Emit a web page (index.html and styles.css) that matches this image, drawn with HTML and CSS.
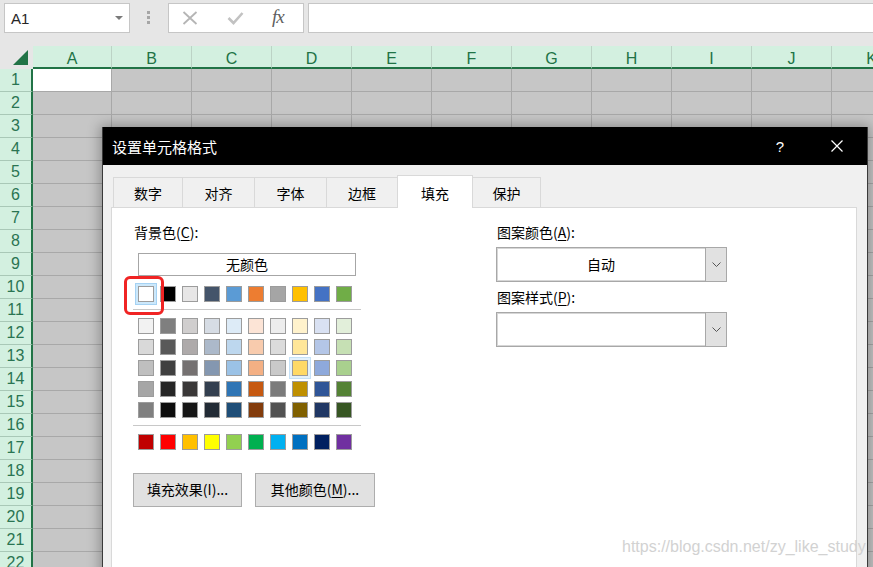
FILE: index.html
```html
<!DOCTYPE html>
<html lang="zh-CN">
<head>
<meta charset="utf-8">
<title>设置单元格格式</title>
<link rel="stylesheet" href="styles.css">
</head>
<body>
<div class="topbar">
  <div class="namebox"><span>A1</span><span class="caret"></span></div>
  <div class="grip"><i></i><i></i><i></i></div>
  <div class="fbtns">
    <svg class="ic-x" width="16" height="14" viewBox="0 0 16 14"><path d="M1.5 1 L14.5 13 M14.5 1 L1.5 13" stroke="#b5b5b5" stroke-width="1.8" fill="none"/></svg>
    <svg class="ic-ok" width="17" height="14" viewBox="0 0 17 14"><path d="M1.5 7 L6.5 12 L15.5 2" stroke="#c2c2c2" stroke-width="2.6" fill="none"/></svg>
    <span class="fx">fx</span>
  </div>
  <div class="finput"></div>
</div>

<div class="sheet">
  <div class="hrow">
    <div class="corner"><svg width="33" height="21" viewBox="0 0 33 21"><polygon points="13,19 28,19 28,4" fill="#217346"/></svg></div>
    <div class="ch first">A</div><div class="ch">B</div><div class="ch">C</div><div class="ch">D</div><div class="ch">E</div><div class="ch">F</div><div class="ch">G</div><div class="ch">H</div><div class="ch">I</div><div class="ch">J</div><div class="ch">K</div>
  </div>
  <div class="row"><div class="rh">1</div><div class="c first act"></div><div class="c"></div><div class="c"></div><div class="c"></div><div class="c"></div><div class="c"></div><div class="c"></div><div class="c"></div><div class="c"></div><div class="c"></div><div class="c"></div></div>
  <div class="row"><div class="rh">2</div><div class="c first"></div><div class="c"></div><div class="c"></div><div class="c"></div><div class="c"></div><div class="c"></div><div class="c"></div><div class="c"></div><div class="c"></div><div class="c"></div><div class="c"></div></div>
  <div class="row"><div class="rh">3</div><div class="c first"></div><div class="c"></div><div class="c"></div><div class="c"></div><div class="c"></div><div class="c"></div><div class="c"></div><div class="c"></div><div class="c"></div><div class="c"></div><div class="c"></div></div>
  <div class="row"><div class="rh">4</div><div class="c first"></div><div class="c"></div><div class="c"></div><div class="c"></div><div class="c"></div><div class="c"></div><div class="c"></div><div class="c"></div><div class="c"></div><div class="c"></div><div class="c"></div></div>
  <div class="row"><div class="rh">5</div><div class="c first"></div><div class="c"></div><div class="c"></div><div class="c"></div><div class="c"></div><div class="c"></div><div class="c"></div><div class="c"></div><div class="c"></div><div class="c"></div><div class="c"></div></div>
  <div class="row"><div class="rh">6</div><div class="c first"></div><div class="c"></div><div class="c"></div><div class="c"></div><div class="c"></div><div class="c"></div><div class="c"></div><div class="c"></div><div class="c"></div><div class="c"></div><div class="c"></div></div>
  <div class="row"><div class="rh">7</div><div class="c first"></div><div class="c"></div><div class="c"></div><div class="c"></div><div class="c"></div><div class="c"></div><div class="c"></div><div class="c"></div><div class="c"></div><div class="c"></div><div class="c"></div></div>
  <div class="row"><div class="rh">8</div><div class="c first"></div><div class="c"></div><div class="c"></div><div class="c"></div><div class="c"></div><div class="c"></div><div class="c"></div><div class="c"></div><div class="c"></div><div class="c"></div><div class="c"></div></div>
  <div class="row"><div class="rh">9</div><div class="c first"></div><div class="c"></div><div class="c"></div><div class="c"></div><div class="c"></div><div class="c"></div><div class="c"></div><div class="c"></div><div class="c"></div><div class="c"></div><div class="c"></div></div>
  <div class="row"><div class="rh">10</div><div class="c first"></div><div class="c"></div><div class="c"></div><div class="c"></div><div class="c"></div><div class="c"></div><div class="c"></div><div class="c"></div><div class="c"></div><div class="c"></div><div class="c"></div></div>
  <div class="row"><div class="rh">11</div><div class="c first"></div><div class="c"></div><div class="c"></div><div class="c"></div><div class="c"></div><div class="c"></div><div class="c"></div><div class="c"></div><div class="c"></div><div class="c"></div><div class="c"></div></div>
  <div class="row"><div class="rh">12</div><div class="c first"></div><div class="c"></div><div class="c"></div><div class="c"></div><div class="c"></div><div class="c"></div><div class="c"></div><div class="c"></div><div class="c"></div><div class="c"></div><div class="c"></div></div>
  <div class="row"><div class="rh">13</div><div class="c first"></div><div class="c"></div><div class="c"></div><div class="c"></div><div class="c"></div><div class="c"></div><div class="c"></div><div class="c"></div><div class="c"></div><div class="c"></div><div class="c"></div></div>
  <div class="row"><div class="rh">14</div><div class="c first"></div><div class="c"></div><div class="c"></div><div class="c"></div><div class="c"></div><div class="c"></div><div class="c"></div><div class="c"></div><div class="c"></div><div class="c"></div><div class="c"></div></div>
  <div class="row"><div class="rh">15</div><div class="c first"></div><div class="c"></div><div class="c"></div><div class="c"></div><div class="c"></div><div class="c"></div><div class="c"></div><div class="c"></div><div class="c"></div><div class="c"></div><div class="c"></div></div>
  <div class="row"><div class="rh">16</div><div class="c first"></div><div class="c"></div><div class="c"></div><div class="c"></div><div class="c"></div><div class="c"></div><div class="c"></div><div class="c"></div><div class="c"></div><div class="c"></div><div class="c"></div></div>
  <div class="row"><div class="rh">17</div><div class="c first"></div><div class="c"></div><div class="c"></div><div class="c"></div><div class="c"></div><div class="c"></div><div class="c"></div><div class="c"></div><div class="c"></div><div class="c"></div><div class="c"></div></div>
  <div class="row"><div class="rh">18</div><div class="c first"></div><div class="c"></div><div class="c"></div><div class="c"></div><div class="c"></div><div class="c"></div><div class="c"></div><div class="c"></div><div class="c"></div><div class="c"></div><div class="c"></div></div>
  <div class="row"><div class="rh">19</div><div class="c first"></div><div class="c"></div><div class="c"></div><div class="c"></div><div class="c"></div><div class="c"></div><div class="c"></div><div class="c"></div><div class="c"></div><div class="c"></div><div class="c"></div></div>
  <div class="row"><div class="rh">20</div><div class="c first"></div><div class="c"></div><div class="c"></div><div class="c"></div><div class="c"></div><div class="c"></div><div class="c"></div><div class="c"></div><div class="c"></div><div class="c"></div><div class="c"></div></div>
  <div class="row"><div class="rh">21</div><div class="c first"></div><div class="c"></div><div class="c"></div><div class="c"></div><div class="c"></div><div class="c"></div><div class="c"></div><div class="c"></div><div class="c"></div><div class="c"></div><div class="c"></div></div>
  <div class="row"><div class="rh">22</div><div class="c first"></div><div class="c"></div><div class="c"></div><div class="c"></div><div class="c"></div><div class="c"></div><div class="c"></div><div class="c"></div><div class="c"></div><div class="c"></div><div class="c"></div></div>
</div>

<div class="dialog">
  <div class="dtitle">
    <span class="dname">设置单元格格式</span>
    <span class="dhelp">?</span>
    <svg class="dclose" width="12" height="12" viewBox="0 0 12 12"><path d="M0.5 0.5 L11.5 11.5 M11.5 0.5 L0.5 11.5" stroke="#fff" stroke-width="1.2" fill="none"/></svg>
  </div>
  <div class="dbody">
    <div class="tabs">
      <div class="tab t1">数字</div>
      <div class="tab t2">对齐</div>
      <div class="tab t3">字体</div>
      <div class="tab t4">边框</div>
      <div class="tab t5 active">填充</div>
      <div class="tab t6">保护</div>
    </div>
    <div class="panel">
      <div class="leftcol">
        <div class="label">背景色(<u>C</u>):</div>
        <div class="nocolor">无颜色</div>
        <div class="swgrid toprow">
          <div class="sw picked" style="background:#ffffff"></div>
          <div class="sw" style="background:#000000"></div>
          <div class="sw" style="background:#e7e6e6"></div>
          <div class="sw" style="background:#44546a"></div>
          <div class="sw" style="background:#5b9bd5"></div>
          <div class="sw" style="background:#ed7d31"></div>
          <div class="sw" style="background:#a5a5a5"></div>
          <div class="sw" style="background:#ffc000"></div>
          <div class="sw" style="background:#4472c4"></div>
          <div class="sw" style="background:#70ad47"></div>
        </div>
        <div class="sep"></div>
        <div class="swgrid theme">
          <div class="sw" style="background:#f2f2f2"></div>
          <div class="sw" style="background:#7f7f7f"></div>
          <div class="sw" style="background:#d0cece"></div>
          <div class="sw" style="background:#d6dce4"></div>
          <div class="sw" style="background:#ddebf7"></div>
          <div class="sw" style="background:#fce4d6"></div>
          <div class="sw" style="background:#ededed"></div>
          <div class="sw" style="background:#fff2cc"></div>
          <div class="sw" style="background:#d9e1f2"></div>
          <div class="sw" style="background:#e2efda"></div>

          <div class="sw" style="background:#d9d9d9"></div>
          <div class="sw" style="background:#595959"></div>
          <div class="sw" style="background:#aeaaaa"></div>
          <div class="sw" style="background:#acb9ca"></div>
          <div class="sw" style="background:#bdd7ee"></div>
          <div class="sw" style="background:#f8cbad"></div>
          <div class="sw" style="background:#dbdbdb"></div>
          <div class="sw" style="background:#ffe699"></div>
          <div class="sw" style="background:#b4c6e7"></div>
          <div class="sw" style="background:#c6e0b4"></div>

          <div class="sw" style="background:#bfbfbf"></div>
          <div class="sw" style="background:#404040"></div>
          <div class="sw" style="background:#757171"></div>
          <div class="sw" style="background:#8497b0"></div>
          <div class="sw" style="background:#9bc2e6"></div>
          <div class="sw" style="background:#f4b084"></div>
          <div class="sw" style="background:#c9c9c9"></div>
          <div class="sw hover" style="background:#ffd966"></div>
          <div class="sw" style="background:#8ea9db"></div>
          <div class="sw" style="background:#a9d08e"></div>

          <div class="sw" style="background:#a6a6a6"></div>
          <div class="sw" style="background:#262626"></div>
          <div class="sw" style="background:#3a3838"></div>
          <div class="sw" style="background:#333f4f"></div>
          <div class="sw" style="background:#2f75b5"></div>
          <div class="sw" style="background:#c65911"></div>
          <div class="sw" style="background:#7b7b7b"></div>
          <div class="sw" style="background:#bf8f00"></div>
          <div class="sw" style="background:#2f5597"></div>
          <div class="sw" style="background:#548235"></div>

          <div class="sw" style="background:#808080"></div>
          <div class="sw" style="background:#0d0d0d"></div>
          <div class="sw" style="background:#161616"></div>
          <div class="sw" style="background:#222b35"></div>
          <div class="sw" style="background:#1f4e78"></div>
          <div class="sw" style="background:#833c0c"></div>
          <div class="sw" style="background:#525252"></div>
          <div class="sw" style="background:#806000"></div>
          <div class="sw" style="background:#203764"></div>
          <div class="sw" style="background:#375623"></div>
        </div>
        <div class="sep"></div>
        <div class="swgrid standard">
          <div class="sw" style="background:#c00000"></div>
          <div class="sw" style="background:#ff0000"></div>
          <div class="sw" style="background:#ffc000"></div>
          <div class="sw" style="background:#ffff00"></div>
          <div class="sw" style="background:#92d050"></div>
          <div class="sw" style="background:#00b050"></div>
          <div class="sw" style="background:#00b0f0"></div>
          <div class="sw" style="background:#0070c0"></div>
          <div class="sw" style="background:#002060"></div>
          <div class="sw" style="background:#7030a0"></div>
        </div>
        <div class="btns">
          <div class="btn b1">填充效果(I)...</div>
          <div class="btn b2">其他颜色(<u>M</u>)...</div>
        </div>
      </div>
      <div class="rightcol">
        <div class="label">图案颜色(<u>A</u>):</div>
        <div class="select">
          <div class="sval">自动</div>
          <div class="sdrop"><svg width="9" height="5" viewBox="0 0 9 5"><path d="M0.5 0.5 L4.5 4.5 L8.5 0.5" stroke="#555" stroke-width="1" fill="none"/></svg></div>
        </div>
        <div class="label l2">图案样式(<u>P</u>):</div>
        <div class="select">
          <div class="sval"></div>
          <div class="sdrop"><svg width="9" height="5" viewBox="0 0 9 5"><path d="M0.5 0.5 L4.5 4.5 L8.5 0.5" stroke="#555" stroke-width="1" fill="none"/></svg></div>
        </div>
      </div>
      <div class="mark"></div>
    </div>
  </div>
</div>

<div class="watermark">https://blog.csdn.net/zy_like_study</div>
</body>
</html>
```

FILE: styles.css
```css
* { box-sizing: border-box; }
html, body { margin: 0; padding: 0; }
body {
  width: 873px;
  height: 567px;
  overflow: hidden;
  position: relative;
  background: #e6e6e6;
  font-family: "Liberation Sans", "Noto Sans CJK SC", sans-serif;
}

/* ---------- formula bar ---------- */
.topbar {
  display: flex;
  align-items: flex-start;
  height: 46px;
  padding: 3px 0 0 4px;
}
.namebox {
  width: 126px;
  height: 30px;
  flex: none;
  background: #fff;
  border: 1px solid #c6c6c6;
  display: flex;
  align-items: center;
  justify-content: space-between;
  padding: 0 6px;
  font-size: 15px;
  color: #262626;
}
.caret {
  width: 0;
  height: 0;
  border-left: 4px solid transparent;
  border-right: 4px solid transparent;
  border-top: 4px solid #7a7a7a;
}
.grip {
  margin: 8px 0 0 17px;
  display: flex;
  flex-direction: column;
  gap: 2px;
  flex: none;
}
.grip i {
  display: block;
  width: 3px;
  height: 3px;
  background: #a6a6a6;
}
.fbtns {
  margin-left: 18px;
  width: 136px;
  height: 30px;
  flex: none;
  background: #fff;
  border: 1px solid #c6c6c6;
  display: flex;
  align-items: center;
  padding-left: 13px;
}
.ic-ok { margin-left: 29px; }
.fx {
  margin-left: 28px;
  font-family: "Liberation Serif", serif;
  font-style: italic;
  font-size: 19px;
  color: #5f5f5f;
  margin-top: -2px;
  letter-spacing: -1px;
}
.finput {
  margin-left: 4px;
  flex: 1;
  height: 30px;
  background: #fff;
  border: 1px solid #c6c6c6;
  border-right: none;
}

/* ---------- sheet ---------- */
.sheet { width: 873px; overflow: hidden; }
.hrow, .row { display: flex; }
.hrow { height: 23px; }
.corner {
  width: 33px;
  height: 23px;
  flex: none;
  background: #e6e6e6;
}
.corner svg { display: block; }
.ch {
  width: 80px;
  height: 23px;
  flex: none;
  background: #d3f0e0;
  border-right: 1px solid #bcd3c6;
  border-bottom: 2px solid #217346;
  text-align: center;
  font-size: 16px;
  line-height: 18px;
  padding-top: 4px;
  color: #217346;
}
.ch.first { width: 79px; }
.row { height: 23px; }
.rh {
  width: 33px;
  flex: none;
  background: #d3f0e0;
  border-right: 2px solid #217346;
  border-bottom: 1px solid #a9c8b7;
  text-align: center;
  font-size: 16px;
  line-height: 20px;
  padding-top: 1px;
  color: #2a7452;
}
.c {
  width: 80px;
  flex: none;
  background: #c6c6c6;
  border-right: 1px solid #a8a8a8;
  border-bottom: 1px solid #a8a8a8;
}
.c.first { width: 79px; }
.c.act { background: #fff; }

/* ---------- dialog ---------- */
.dialog {
  position: absolute;
  left: 102px;
  top: 127px;
  width: 766px;
  height: 460px;
  background: #f0f0f0;
  border: 1px solid #3a3a3a;
  border-top: none;
  box-shadow: 0 0 12px 2px rgba(0, 0, 0, 0.3);
  font-family: "Noto Sans CJK SC", "Liberation Sans", sans-serif;
  color: #000;
}
.dtitle {
  height: 38px;
  background: #000;
  color: #fff;
  display: flex;
  align-items: center;
  padding-left: 9px;
  font-size: 15px;
}
.dhelp {
  margin-left: auto;
  font-size: 15px;
  font-family: "Liberation Sans", sans-serif;
}
.dclose { margin: 0 24px 0 47px; }

.dbody { padding: 10px 10px 0 8px; }
.tabs {
  display: flex;
  align-items: flex-end;
  height: 32px;
  padding-left: 2px;
}
.tab {
  height: 30px;
  flex: none;
  border: 1px solid #d9d9d9;
  border-bottom: none;
  margin-left: -1px;
  background: #f0f0f0;
  font-size: 14px;
  text-align: center;
  line-height: 28px;
  padding-top: 1px;
}
.t1 { width: 70px; margin-left: 0; }
.t2 { width: 73px; }
.t3 { width: 73px; }
.t4 { width: 72px; }
.t5 { width: 76px; }
.t6 { width: 69px; }
.tab.active {
  height: 33px;
  margin-bottom: -1px;
  background: #fff;
  position: relative;
  z-index: 1;
  padding-top: 3px;
}

.panel {
  position: relative;
  height: 400px;
  background: #fff;
  border: 1px solid #d9d9d9;
  display: flex;
  align-items: flex-start;
  padding: 14px 0 0 21px;
}
.leftcol { width: 228px; flex: none; }
.rightcol { width: 231px; flex: none; margin-left: 135px; }
.label {
  font-size: 14px;
  line-height: 20px;
  padding-left: 1px;
}
.label u, .btn u { text-underline-offset: 2px; }
.nocolor {
  margin: 11px 0 0 5px;
  width: 218px;
  height: 23px;
  border: 1px solid #a6a6a6;
  font-size: 14px;
  line-height: 20px;
  text-align: center;
}
.swgrid {
  display: grid;
  grid-template-columns: repeat(10, 16px);
  column-gap: 6px;
  row-gap: 5px;
  margin-left: 5px;
}
.toprow { margin-top: 10px; }
.theme { margin-top: 8px; }
.standard { margin-top: 8px; }
.sw {
  width: 16px;
  height: 16px;
  border: 1px solid #9c9c9c;
}
.sw.picked { box-shadow: 0 0 0 2px #cce8fb, 0 0 0 3px #a5d2f3; }
.sw.hover { box-shadow: 0 0 0 2px #e3f1fc, 0 0 0 3px #c5e1f7; }
.sep {
  margin-top: 7px;
  height: 1px;
  width: 228px;
  background: #c8c8c8;
}
.btns {
  display: flex;
  gap: 13px;
  margin-top: 23px;
  width: 260px;
}
.btn {
  flex: none;
  height: 34px;
  background: #e1e1e1;
  border: 1px solid #adadad;
  font-size: 14px;
  line-height: 31px;
  text-align: center;
}
.b1 { width: 109px; }
.b2 { width: 120px; }

.select {
  margin-top: 5px;
  height: 35px;
  border: 1px solid #a8a8a8;
  box-shadow: inset 0 0 0 1px #d6d6d6;
  display: flex;
  background: #fff;
}
.sval {
  flex: 1;
  text-align: center;
  font-size: 14px;
  line-height: 32px;
}
.sdrop {
  width: 21px;
  background: #e1e1e1;
  border-left: 1px solid #a8a8a8;
  display: flex;
  align-items: center;
  justify-content: center;
}
.sdrop svg { display: block; }
.label.l2 { margin-top: 5px; }

.mark {
  position: absolute;
  left: 12px;
  top: 68px;
  width: 40px;
  height: 39px;
  border: 3px solid #f02424;
  border-radius: 6px;
}

.watermark {
  position: absolute;
  left: 622px;
  top: 538px;
  font-family: "Liberation Sans", sans-serif;
  font-size: 16px;
  line-height: 18px;
  color: #d2d2d2;
  white-space: nowrap;
}
```
